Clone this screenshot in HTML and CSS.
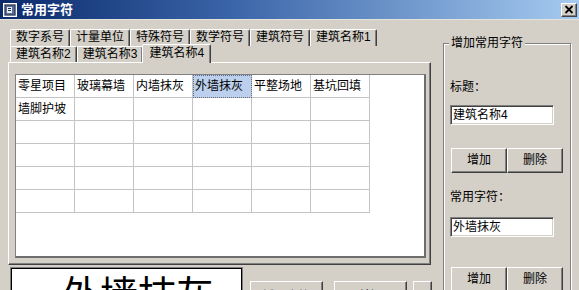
FILE: index.html
```html
<!DOCTYPE html>
<html lang="zh">
<head>
<meta charset="utf-8">
<title>常用字符</title>
<link rel="stylesheet" href="styles.css">
</head>
<body>
<div class="window">
  <div class="titlebar">
    <svg class="appicon" width="14" height="14" viewBox="0 0 14 14">
      <rect x="0.5" y="0.5" width="13" height="13" fill="#d4d0c8" stroke="#ffffff"/>
      <rect x="2" y="2" width="10" height="10" fill="#5a6f96" stroke="#1d2b55"/>
      <rect x="4" y="4" width="5" height="6" fill="#e8ecf4"/>
      <rect x="5" y="5" width="3" height="1" fill="#1d2b55"/>
      <rect x="5" y="7" width="3" height="1" fill="#1d2b55"/>
    </svg>
    <span class="title">常用字符</span>
    <span class="closebtn">
      <svg width="10" height="9" viewBox="0 0 10 9">
        <path d="M1.5 1 L8.5 8 M8.5 1 L1.5 8" stroke="#000" stroke-width="1.8"/>
      </svg>
    </span>
  </div>
  <div class="client">
    <div class="leftcol">
      <div class="tabs">
        <div class="tabrow">
          <span class="tab">数字系号</span>
          <span class="tab">计量单位</span>
          <span class="tab">特殊符号</span>
          <span class="tab">数学符号</span>
          <span class="tab">建筑符号</span>
          <span class="tab">建筑名称1</span>
        </div>
        <div class="tabrow">
          <span class="tab">建筑名称2</span>
          <span class="tab">建筑名称3</span>
          <span class="tab tab-active">建筑名称4</span>
        </div>
      </div>
      <div class="panel">
        <div class="gridbox">
          <div class="grid">
            <div class="cell">零星项目</div>
            <div class="cell">玻璃幕墙</div>
            <div class="cell">内墙抹灰</div>
            <div class="cell cell-sel">外墙抹灰</div>
            <div class="cell">平整场地</div>
            <div class="cell">基坑回填</div>
            <div class="cell">墙脚护坡</div>
            <div class="cell"></div><div class="cell"></div><div class="cell"></div><div class="cell"></div><div class="cell"></div>
            <div class="cell"></div><div class="cell"></div><div class="cell"></div><div class="cell"></div><div class="cell"></div><div class="cell"></div>
            <div class="cell"></div><div class="cell"></div><div class="cell"></div><div class="cell"></div><div class="cell"></div><div class="cell"></div>
            <div class="cell"></div><div class="cell"></div><div class="cell"></div><div class="cell"></div><div class="cell"></div><div class="cell"></div>
            <div class="cell"></div><div class="cell"></div><div class="cell"></div><div class="cell"></div><div class="cell"></div><div class="cell"></div>
          </div>
        </div>
      </div>
      <div class="bottom">
        <div class="bigbox">外墙抹灰</div>
        <span class="btn btn-b1 btn-disabled">插入字符</span>
        <span class="btn btn-b2">关闭</span>
        <span class="btn btn-b3">?</span>
      </div>
    </div>
    <div class="group">
      <span class="group-title">增加常用字符</span>
      <div class="lbl lbl-1">标题：</div>
      <div class="input input-1">建筑名称4</div>
      <div class="btnrow btnrow-1">
        <span class="btn btn-g">增加</span>
        <span class="btn btn-g">删除</span>
      </div>
      <div class="lbl lbl-2">常用字符：</div>
      <div class="input input-2">外墙抹灰</div>
      <div class="btnrow btnrow-2">
        <span class="btn btn-g">增加</span>
        <span class="btn btn-g">删除</span>
      </div>
    </div>
  </div>
</div>
</body>
</html>
```

FILE: styles.css
```css
* { box-sizing: border-box; }
html, body { margin: 0; padding: 0; background: #d4d0c8; }
body {
  font-family: "Liberation Sans", "Noto Sans CJK SC", sans-serif;
  font-size: 12px;
  color: #000;
}
.window {
  width: 579px;
  height: 290px;
  overflow: hidden;
  background: #d4d0c8;
}
.titlebar {
  height: 20px;
  display: flex;
  align-items: center;
  padding: 0 2px 0 3px;
  background: linear-gradient(to right, #0b2a6c 0%, #3a65a8 40%, #a6caf0 100%);
  border-bottom: 1px solid #e4e2dc;
}
.appicon { display: block; flex: none; }
.title {
  margin-left: 4px;
  color: #fff;
  font-weight: bold;
  font-size: 13px;
  line-height: 16px;
}
.closebtn {
  margin-left: auto;
  width: 16px;
  height: 14px;
  display: flex;
  align-items: center;
  justify-content: center;
  background: #d4d0c8;
  border-top: 1px solid #fff;
  border-left: 1px solid #fff;
  border-right: 1px solid #404040;
  border-bottom: 1px solid #404040;
  box-shadow: inset -1px -1px #808080;
}
.closebtn svg { display: block; }

.client { display: flex; align-items: flex-start; }
.leftcol {
  width: 431px;
  flex: none;
  padding-left: 8px;
  padding-top: 9px;
}
.tabs { padding-left: 2px; }
.tabrow { display: flex; height: 17px; }
.tabrow + .tabrow { height: 16px; }
.tab {
  display: block;
  height: 100%;
  padding: 0 5px;
  line-height: 15px;
  white-space: nowrap;
  border-top: 1px solid #fff;
  border-left: 1px solid #fff;
  border-right: 1px solid #404040;
  border-radius: 2px 2px 0 0;
  box-shadow: inset -1px 0 #808080;
  background: #d4d0c8;
}
.tab-active {
  position: relative;
  z-index: 2;
  height: 19px;
  margin: -2px -2px -1px -1px;
  padding: 0 6px 0 6px;
  line-height: 17px;
}
.panel {
  position: relative;
  z-index: 1;
  width: 423px;
  height: 203px;
  border-top: 1px solid #fff;
  border-left: 1px solid #fff;
  border-right: 1px solid #404040;
  border-bottom: 1px solid #404040;
  box-shadow: inset -1px -1px #808080;
  padding: 11px 0 0 6px;
}
.gridbox {
  width: 411px;
  height: 184px;
  background: #fff;
  border-top: 1px solid #808080;
  border-left: 1px solid #808080;
  border-right: 2px solid #6e6e6e;
  border-bottom: 2px solid #6e6e6e;
  overflow: hidden;
}
.grid {
  display: grid;
  grid-template-columns: repeat(6, 59px);
  grid-auto-rows: 23px;
}
.cell {
  border-right: 1px solid #c4c4c4;
  border-bottom: 1px solid #c4c4c4;
  padding-left: 2px;
  line-height: 22px;
  white-space: nowrap;
  overflow: hidden;
}
.cell-sel {
  background: #bccfec;
  outline: 1px dotted #5a6a8a;
  outline-offset: -1px;
}

.bottom {
  display: flex;
  align-items: flex-start;
  margin-top: 2px;
  padding-left: 2px;
}
.bigbox {
  width: 233px;
  height: 40px;
  flex: none;
  background: #fff;
  border: 1px solid #808080;
  box-shadow: inset 1px 1px #000, inset -1px 0 #000;
  padding: 4px 0 0 51px;
  font-family: "Noto Sans CJK SC", sans-serif;
  font-size: 38px;
  line-height: 40px;
  white-space: nowrap;
  overflow: hidden;
}
.btn {
  display: block;
  flex: none;
  height: 25px;
  text-align: center;
  line-height: 22px;
  background: #d4d0c8;
  border-top: 1px solid #fff;
  border-left: 1px solid #fff;
  border-right: 1px solid #404040;
  border-bottom: 1px solid #404040;
  box-shadow: inset -1px -1px #808080;
  white-space: nowrap;
}
.btn-b1, .btn-b2, .btn-b3 { padding-top: 3px; }
.btn-b1 { width: 73px; margin: 14px 0 0 7px; }
.btn-b2 { width: 73px; margin: 14px 0 0 11px; }
.btn-b3 { width: 19px; margin: 14px 0 0 6px; }
.btn-disabled { color: #808080; text-shadow: 1px 1px #fff; }

.group {
  position: relative;
  flex: none;
  width: 128px;
  height: 260px;
  margin: 23px 0 0 12px;
  border: 1px solid #808080;
  box-shadow: inset 1px 1px #fff, 1px 1px #fff;
  padding-left: 6px;
}
.group-title {
  position: absolute;
  top: -8px;
  left: 5px;
  padding: 0 2px;
  background: #d4d0c8;
  line-height: 14px;
}
.lbl { line-height: 14px; height: 14px; white-space: nowrap; }
.lbl-1 { margin-top: 36px; }
.lbl-2 { margin-top: 17px; }
.input {
  width: 104px;
  height: 20px;
  background: #fff;
  border-top: 1px solid #808080;
  border-left: 1px solid #808080;
  border-right: 1px solid #fff;
  border-bottom: 1px solid #fff;
  box-shadow: inset 1px 1px #404040, inset -1px -1px #d4d0c8;
  padding-left: 2px;
  line-height: 18px;
  white-space: nowrap;
}
.input-1 { margin-top: 11px; }
.input-2 { margin-top: 13px; }
.btnrow { display: flex; padding-left: 1px; }
.btnrow-1 { margin-top: 23px; }
.btnrow-2 { margin-top: 30px; }
.btn-g { width: 56px; }
```
